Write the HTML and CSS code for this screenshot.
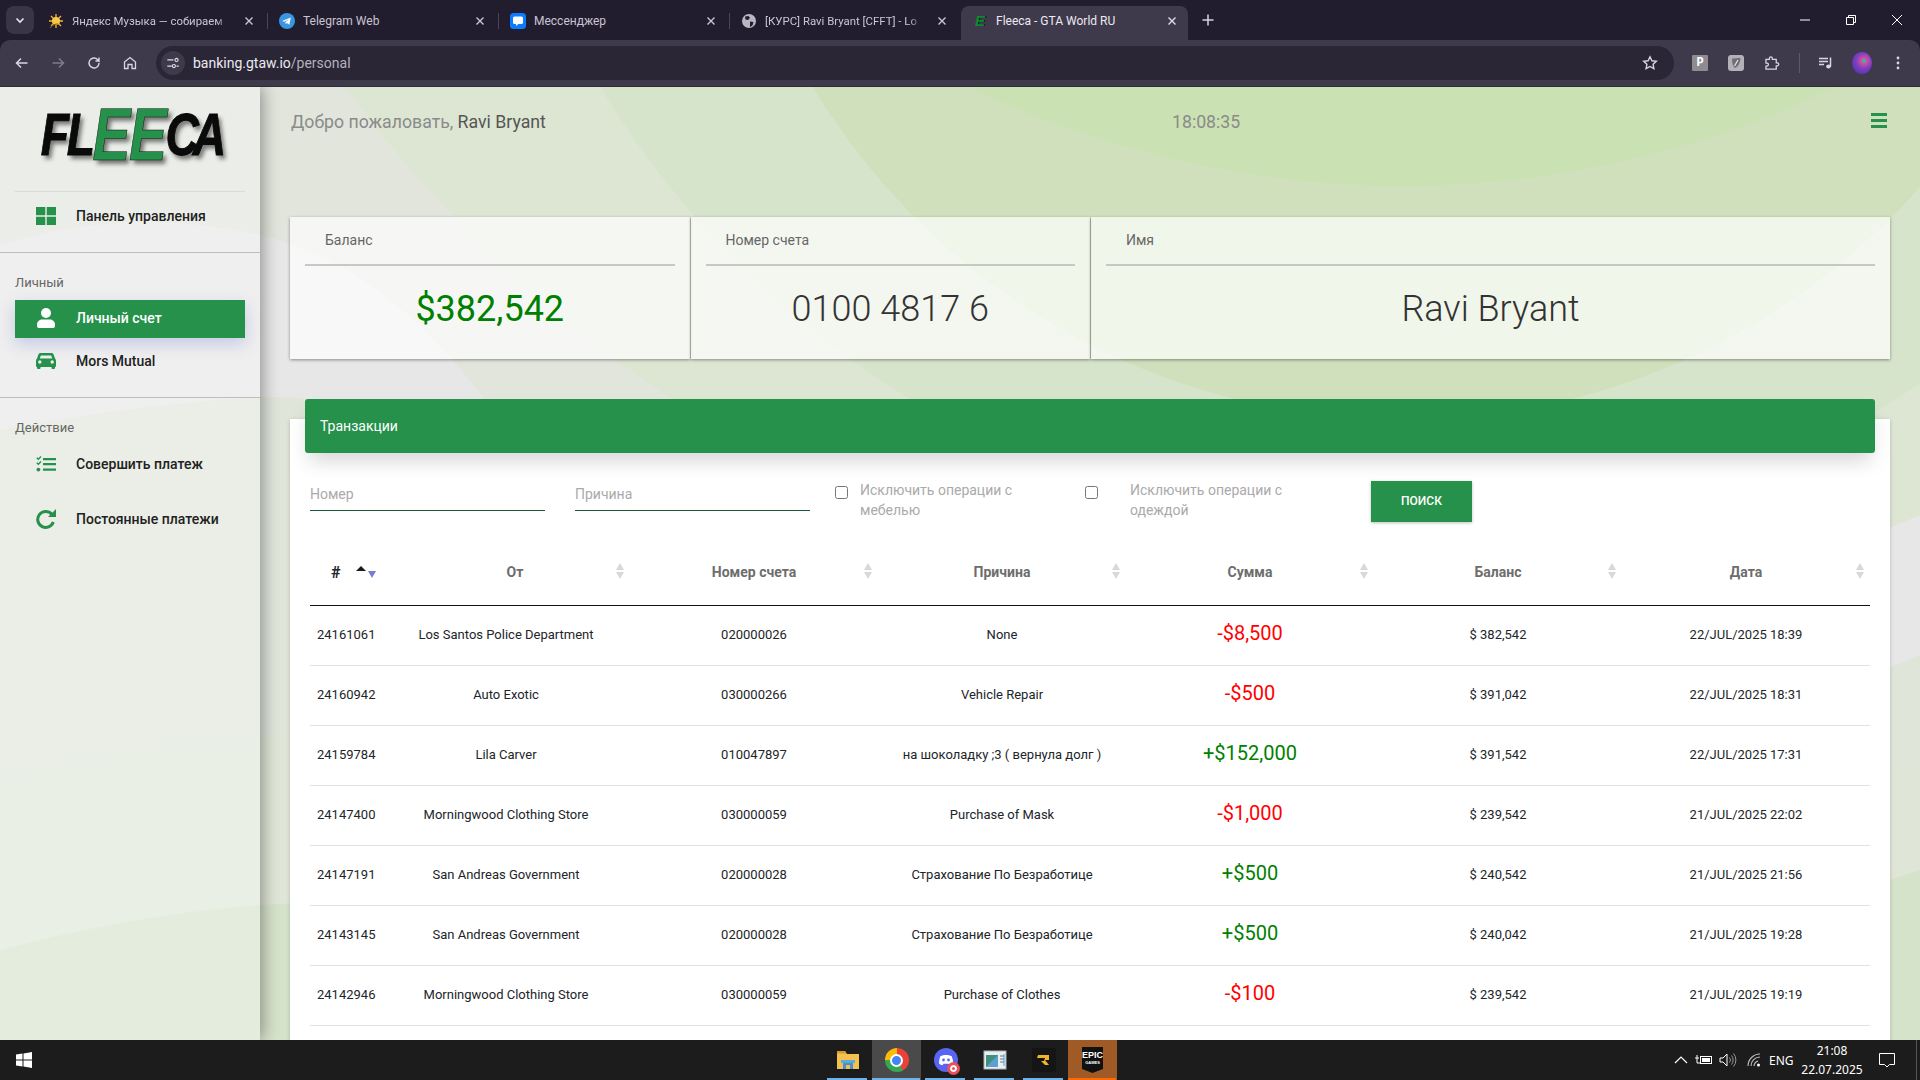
FILE: index.html
```html
<!DOCTYPE html>
<html lang="ru">
<head>
<meta charset="utf-8">
<title>Fleeca - GTA World RU</title>
<link rel="stylesheet" href="styles.css">
</head>
<body>
<div class="app">
  <header class="browser">
    <div class="tabstrip">
      <button class="tablist"><svg width="12" height="12" viewBox="0 0 12 12"><path d="M2.5 4.5 6 8l3.5-3.5" fill="none" stroke="#e8e6ef" stroke-width="1.6"/></svg></button>
      <div class="tab sep">
        <svg class="fav" viewBox="0 0 16 16"><g stroke="#f2b632" stroke-width="1.3"><path d="M8 1v14M1 8h14M3 3l10 10M13 3 3 13"/></g><circle cx="8" cy="8" r="4" fill="#f7c948"/><path d="M2 15c2-3 5-4 8-4" stroke="#8a5a1c" stroke-width="1.2" fill="none"/></svg>
        <span class="tab-title tight fade">Яндекс Музыка — собираем</span>
        <svg class="tab-x" viewBox="0 0 16 16"><path d="m4.5 4.5 7 7m0-7-7 7" stroke="#c9c5d3" stroke-width="1.4"/></svg>
      </div>
      <div class="tab sep">
        <svg class="fav" viewBox="0 0 16 16"><circle cx="8" cy="8" r="8" fill="#3a96e0"/><path d="M3.2 7.9 11.8 4.5 10.4 11.8 7.9 10 6.6 11.2 6.5 9.2 10.2 6 5.5 8.7Z" fill="#fff"/></svg>
        <span class="tab-title">Telegram Web</span>
        <svg class="tab-x" viewBox="0 0 16 16"><path d="m4.5 4.5 7 7m0-7-7 7" stroke="#c9c5d3" stroke-width="1.4"/></svg>
      </div>
      <div class="tab sep">
        <svg class="fav" viewBox="0 0 16 16"><rect width="16" height="16" rx="3.5" fill="#0a7cff"/><path d="M4.5 3.5h7a1.5 1.5 0 0 1 1.5 1.5v4.5a1.5 1.5 0 0 1-1.5 1.5H8.5L6 13v-2H4.500A1.500 1.500 0 0 1 3 9.500V5a1.500 1.500 0 0 1 1.500-1.500Z" fill="#fff"/></svg>
        <span class="tab-title">Мессенджер</span>
        <svg class="tab-x" viewBox="0 0 16 16"><path d="m4.5 4.500 7 7m0-7-7 7" stroke="#c9c5d3" stroke-width="1.4"/></svg>
      </div>
      <div class="tab">
        <svg class="fav" viewBox="0 0 16 16"><circle cx="8" cy="8" r="7" fill="#b9b6c2"/><path d="M4 3.500 7.500 3 9 5 7 7 4.500 6.500ZM9 8.500l3.500.5-1 3.500L9 14Z" fill="#221d2e"/></svg>
        <span class="tab-title tight fade">[КУРС] Ravi Bryant [CFFT] - Lo</span>
        <svg class="tab-x" viewBox="0 0 16 16"><path d="m4.500 4.500 7 7m0-7-7 7" stroke="#c9c5d3" stroke-width="1.400"/></svg>
      </div>
      <div class="tab tab-active">
        <span class="fav fav-e">E</span>
        <span class="tab-title">Fleeca - GTA World RU</span>
        <svg class="tab-x" viewBox="0 0 16 16"><path d="m4.500 4.500 7 7m0-7-7 7" stroke="#e0dde8" stroke-width="1.400"/></svg>
      </div>
      <svg class="newtab" viewBox="0 0 16 16"><path d="M8 2.500v11M2.500 8h11" stroke="#d8d5e0" stroke-width="1.500"/></svg>
      <div class="winbtns">
        <svg viewBox="0 0 46 40"><path d="M18 20h10" stroke="#fff"/></svg>
        <svg viewBox="0 0 46 40"><path d="M18.500 17.500h7v7h-7zM20.500 17.500v-2h7v7h-2" fill="none" stroke="#fff"/></svg>
        <svg viewBox="0 0 46 40"><path d="m18 15 10 10m0-10L18 25" stroke="#fff"/></svg>
      </div>
    </div>
    <div class="toolbar">
      <span class="tb-btn"><svg viewBox="0 0 16 16"><path d="M13.500 8h-11M7 3.500 2.500 8 7 12.500" fill="none" stroke="#d9d6e0" stroke-width="1.500"/></svg></span>
      <span class="tb-btn"><svg viewBox="0 0 16 16"><path d="M2.500 8h11M9 3.500 13.500 8 9 12.500" fill="none" stroke="#7f7b8a" stroke-width="1.500"/></svg></span>
      <span class="tb-btn"><svg viewBox="0 0 16 16"><path d="M13 8a5 5 0 1 1-1.500-3.600L13 6V2.500M13 6H9.500" fill="none" stroke="#d9d6e0" stroke-width="1.400"/></svg></span>
      <span class="tb-btn"><svg viewBox="0 0 16 16"><path d="M2.500 7 8 2.500 13.500 7v6.500h-3.500V9.500H6v4H2.500Z" fill="none" stroke="#d9d6e0" stroke-width="1.300"/></svg></span>
      <div class="omnibox">
        <span class="chip"><svg viewBox="0 0 16 16" width="14" height="14"><path d="M1.500 4.500h7M12 11.500h2.500M1.500 11.500h5" stroke="#e0dde8" stroke-width="1.300"/><circle cx="12" cy="4.500" r="1.800" fill="none" stroke="#e0dde8" stroke-width="1.300"/><circle cx="9" cy="11.500" r="1.800" fill="none" stroke="#e0dde8" stroke-width="1.300"/></svg></span>
        <span class="url">banking.gtaw.io<span class="url-path">/personal</span></span>
        <svg class="star" viewBox="0 0 16 16"><path d="m8 1.800 1.900 4 4.400.5-3.200 3 .8 4.400L8 11.500l-3.900 2.200.8-4.400-3.200-3 4.400-.5Z" fill="none" stroke="#d9d6e0" stroke-width="1.400"/></svg>
      </div>
      <span class="tb-btn ext-first"><span class="ext-p">P</span></span>
      <span class="tb-btn"><svg viewBox="0 0 16 16"><rect width="16" height="16" rx="3" fill="#b3b1b8"/><path d="M4 3.500c3 0 6-.5 8.500-.5-.3 4-1.500 8-5.500 10-2-1.500-3-5-3-9.500Z" fill="#6f6d75"/><path d="m10 5-3.500 6" stroke="#e6e5e8" stroke-width="1.200"/></svg></span>
      <span class="tb-btn"><svg viewBox="0 0 16 16"><path d="M2 4h3.500V3a1.500 1.500 0 0 1 3 0v1H12.500v3.500h1a1.300 1.300 0 0 1 0 3h-1V14H2v-3.200h1a1.500 1.500 0 0 0 0-3H2Z" transform="translate(0 .5) scale(.98)" fill="none" stroke="#d9d6e0" stroke-width="1.300"/></svg></span>
      <span class="tb-line"></span>
      <span class="tb-btn"><svg viewBox="0 0 16 16"><path d="M1 3.500h9M1 6.500h9M1 9.500h5" stroke="#d9d6e0" stroke-width="1.400"/><path d="M12.500 2.500v9" stroke="#d9d6e0" stroke-width="1.500"/><ellipse cx="10.500" cy="11.500" rx="2.300" ry="2" fill="#d9d6e0"/></svg></span>
      <span class="tb-btn"><span class="avatar"></span></span>
      <span class="tb-btn"><svg viewBox="0 0 16 16"><circle cx="8" cy="3" r="1.400" fill="#d9d6e0"/><circle cx="8" cy="8" r="1.400" fill="#d9d6e0"/><circle cx="8" cy="13" r="1.400" fill="#d9d6e0"/></svg></span>
    </div>
  </header>

  <div class="page">
    <svg class="bg" viewBox="0 87 1920 953" preserveAspectRatio="none" aria-hidden="true">
      <rect x="0" y="87" width="1920" height="953" fill="#d6e3cb"/>
      <path d="M0 950Q130 915 260 905T1890 880L1920 870V87H0Z" fill="#dfe6d7"/>
      <path d="M0 777Q130 745 260 737T1890 773L1920 762V87H0Z" fill="#e0e5da"/>
      <path d="M0 430Q130 405 260 397T1890 667L1920 655V87H0Z" fill="#e7e7e7"/>
      <path d="M0 245Q130 205 260 235T500 420H1920V87H0Z" fill="#e1e5dc"/>
      <circle cx="1403" cy="-694" r="1315" fill="#dde6d3"/>
      <circle cx="1403" cy="-400" r="939" fill="#d7e4cc"/>
      <circle cx="1403" cy="-270" r="690" fill="#d0e0bd"/>
      <circle cx="1403" cy="-814" r="1000" fill="#cae2b3"/>
    </svg>

    <aside class="sidebar">
      <div class="logo"><span class="logo-word"><span class="logo-fl">FL</span><span class="logo-ee">EE</span><span class="logo-ca">CA</span></span></div>
      <a class="nav-item nav-dash">
        <svg class="nav-ico" viewBox="0 0 20 18"><path d="M0 0h9.300v8.200H0zM10.700 0H20v8.200h-9.300zM0 9.800h9.300V18H0zM10.700 9.800H20V18h-9.300z" fill="#25914a"/></svg>
        Панель управления
      </a>
      <section class="nav-section sec-bordered">
        <div class="nav-label">Личный</div>
        <a class="nav-item active">
          <svg class="nav-ico" viewBox="0 0 20 20"><circle cx="10" cy="5" r="5" fill="#fff"/><path d="M1 16.500C1 13 4 11.500 6 11.500h8c2 0 5 1.500 5 5V18a2 2 0 0 1-2 2H3a2 2 0 0 1-2-2Z" fill="#fff"/></svg>
          Личный счет
        </a>
        <a class="nav-item item-next">
          <svg class="nav-ico" viewBox="0 0 20 16"><path d="M4.500 0h11c1 0 1.800.6 2.100 1.500L19 5.500c.6.500 1 1.200 1 2V13a1 1 0 0 1-1 1v1a1 1 0 0 1-1 1h-1.500a1 1 0 0 1-1-1v-1h-11v1a1 1 0 0 1-1 1H2a1 1 0 0 1-1-1v-1a1 1 0 0 1-1-1V7.500c0-.8.400-1.500 1-2l1.400-4C2.700.6 3.500 0 4.500 0Zm.3 2.500L3.800 5.500h12.400l-1-3ZM3.800 7.300a1.700 1.700 0 1 0 0 3.400 1.700 1.700 0 0 0 0-3.400Zm12.400 0a1.700 1.700 0 1 0 0 3.400 1.700 1.700 0 0 0 0-3.400Z" fill="#25914a" fill-rule="evenodd"/></svg>
          Mors Mutual
        </a>
      </section>
      <section class="nav-section">
        <div class="nav-label">Действие</div>
        <a class="nav-item item-first">
          <svg class="nav-ico" viewBox="0 0 20 16"><path d="M7 2h13v2.300H7zM7 7h13v2.300H7zM7 12.500h13v2.300H7z" fill="#25914a"/><path d="m.8 1.800 1.500 1.500L5 .6M.8 6.800l1.500 1.500L5 5.600" fill="none" stroke="#25914a" stroke-width="1.400"/><circle cx="2.400" cy="13.600" r="1.900" fill="#25914a"/></svg>
          Совершить платеж
        </a>
        <a class="nav-item item-wide">
          <svg class="nav-ico" viewBox="0 0 20 20"><path d="M15.800 5.200A8 8 0 1 0 17.300 13" fill="none" stroke="#25914a" stroke-width="3"/><path d="M20 0v8h-8Z" fill="#25914a"/></svg>
          Постоянные платежи
        </a>
      </section>
    </aside>

    <main class="main">
      <div class="topbar">
        <div class="welcome">Добро пожаловать, <span class="welcome-name">Ravi Bryant</span></div>
        <div class="clock">18:08:35</div>
        <div class="burger"><i></i><i></i><i></i></div>
      </div>

      <div class="cards">
        <div class="card"><div class="card-title">Баланс</div><div class="card-value money">$382,542</div></div>
        <div class="card"><div class="card-title">Номер счета</div><div class="card-value">0100 4817 6</div></div>
        <div class="card"><div class="card-title">Имя</div><div class="card-value">Ravi Bryant</div></div>
      </div>

      <section class="panel">
        <div class="panel-head">Транзакции</div>
        <form class="filters">
          <input class="field" type="text" placeholder="Номер">
          <input class="field field-next" type="text" placeholder="Причина">
          <label class="check check-a"><input type="checkbox"><span>Исключить операции с мебелью</span></label>
          <label class="check check-b"><input type="checkbox"><span>Исключить операции с одеждой</span></label>
          <button class="search" type="button">ПОИСК</button>
        </form>
        <table class="tx">
          <colgroup><col class="c-id"><col class="c-from"><col class="c-n"><col class="c-n"><col class="c-n"><col class="c-n"><col class="c-n"></colgroup>
          <thead>
            <tr>
              <th class="th-id">#<i class="sort-up"></i><i class="sort-down"></i></th>
              <th class="th-from">От<i class="sort"></i></th>
              <th>Номер счета<i class="sort"></i></th>
              <th>Причина<i class="sort"></i></th>
              <th>Сумма<i class="sort"></i></th>
              <th>Баланс<i class="sort"></i></th>
              <th>Дата<i class="sort"></i></th>
            </tr>
          </thead>
          <tbody>
            <tr><td>24161061</td><td class="from">Los Santos Police Department</td><td>020000026</td><td>None</td><td class="neg">-$8,500</td><td>$ 382,542</td><td>22/JUL/2025 18:39</td></tr>
            <tr><td>24160942</td><td class="from">Auto Exotic</td><td>030000266</td><td>Vehicle Repair</td><td class="neg">-$500</td><td>$ 391,042</td><td>22/JUL/2025 18:31</td></tr>
            <tr><td>24159784</td><td class="from">Lila Carver</td><td>010047897</td><td>на шоколадку ;3 ( вернула долг )</td><td class="pos">+$152,000</td><td>$ 391,542</td><td>22/JUL/2025 17:31</td></tr>
            <tr><td>24147400</td><td class="from">Morningwood Clothing Store</td><td>030000059</td><td>Purchase of Mask</td><td class="neg">-$1,000</td><td>$ 239,542</td><td>21/JUL/2025 22:02</td></tr>
            <tr><td>24147191</td><td class="from">San Andreas Government</td><td>020000028</td><td>Страхование По Безработице</td><td class="pos">+$500</td><td>$ 240,542</td><td>21/JUL/2025 21:56</td></tr>
            <tr><td>24143145</td><td class="from">San Andreas Government</td><td>020000028</td><td>Страхование По Безработице</td><td class="pos">+$500</td><td>$ 240,042</td><td>21/JUL/2025 19:28</td></tr>
            <tr><td>24142946</td><td class="from">Morningwood Clothing Store</td><td>030000059</td><td>Purchase of Clothes</td><td class="neg">-$100</td><td>$ 239,542</td><td>21/JUL/2025 19:19</td></tr>
          </tbody>
        </table>
      </section>
    </main>
  </div>

  <footer class="taskbar">
    <span class="start"><svg viewBox="0 0 16 16" width="16" height="16"><path d="M0 2.500 6.500 1.600V7.500H0ZM7.500 1.400 16 0V7.500H7.500ZM0 8.500H6.500V14.400L0 13.500ZM7.500 8.500H16V16L7.500 14.600Z" fill="#fff"/></svg></span>
    <div class="task-apps">
      <span class="app-slot run"><svg viewBox="0 0 24 24" width="24" height="24"><path d="M1 3h8l2 3h12v15H1Z" fill="#f3c14f"/><path d="M1 3h8l1.500 2.500H1Z" fill="#d99c2b"/><path d="M7 14h10v7h-3v-4h-4v4H7Z" fill="#4a90c9"/><path d="M5 12h14v3H5Z" fill="#5fa8de"/></svg></span>
      <span class="app-slot run-full"><span class="chrome"><span class="chrome-in"></span></span></span>
      <span class="app-slot run"><span class="discord"><svg viewBox="0 0 24 24" width="24" height="24"><circle cx="12" cy="12" r="12" fill="#5865f2"/><path d="M6.500 8c3-1.500 8-1.500 11 0 1 2 1.800 5 1.500 7.500-1.200 1-2.500 1.500-3.500 1.700l-1-1.500h-5l-1 1.500c-1-.2-2.300-.7-3.500-1.700C5 13 5.500 10 6.500 8Z" fill="#fff"/><circle cx="9.500" cy="12" r="1.400" fill="#5865f2"/><circle cx="14.500" cy="12" r="1.400" fill="#5865f2"/></svg><i class="rec"></i></span></span>
      <span class="app-slot run"><svg viewBox="0 0 24 24" width="24" height="24"><rect x="1" y="3" width="22" height="18" fill="#eceff1"/><rect x="1" y="3" width="22" height="18" fill="none" stroke="#a9b2b8"/><path d="M3 7h12v12H3Z" fill="#3f8f7d"/><path d="M3 19 15 7v12Z" fill="#5f9fd0"/><path d="M17 8h4M17 11h4M17 14h4" stroke="#6b7780"/><path d="M21 6v12" stroke="#3aa3d8"/></svg></span>
      <span class="app-slot run"><span class="rstar"><svg viewBox="0 0 14 12" width="14" height="12"><path d="M1 1h11v5H8l4 5H8L4 7H7l1-3H0Z" fill="#f0b429"/></svg></span></span>
      <span class="app-slot run-epic"><span class="epic">EPIC<small>GAMES</small></span></span>
    </div>
    <div class="tray">
      <svg viewBox="0 0 16 16" width="16" height="16" class="tr-caret"><path d="m2 11 6-6 6 6" fill="none" stroke="#fff" stroke-width="1.200"/></svg>
      <svg viewBox="0 0 18 16" width="18" height="16" class="tr-bat"><path d="M0 6h4M2 3v3" stroke="#fff"/><rect x="5.500" y="4.500" width="11" height="7" fill="none" stroke="#fff"/><rect x="7" y="6" width="8" height="4" fill="#fff"/><path d="M2 6v5h3" fill="none" stroke="#fff"/></svg>
      <svg viewBox="0 0 18 16" width="18" height="16" class="tr-vol"><path d="M1 6h3l4-4v12l-4-4H1Z" fill="none" stroke="#fff"/><path d="M10.500 5.500a4 4 0 0 1 0 5M12.500 3.500a7 7 0 0 1 0 9M14.500 1.500a10 10 0 0 1 0 13" fill="none" stroke="#999"/></svg>
      <svg viewBox="0 0 16 16" width="16" height="16" class="tr-wifi"><path d="M2 14A12 12 0 0 1 14 2M5 14a9 9 0 0 1 9-9M8 14a6 6 0 0 1 4-5" fill="none" stroke="#bbb" stroke-width="1.200"/><circle cx="12.500" cy="13" r="1.500" fill="#fff"/></svg>
      <span class="lang">ENG</span>
      <span class="datetime"><span>21:08</span><span>22.07.2025</span></span>
      <svg viewBox="0 0 18 16" width="18" height="16" class="tr-note"><path d="M1.500 1.500h15v11h-5L9 15l-2.500-2.500h-5Z" fill="none" stroke="#fff"/></svg>
      <i class="showdesk"></i>
    </div>
  </footer>
</div>
</body>
</html>
```
FILE: styles.css
```css
* { box-sizing: border-box; }
html, body { margin: 0; height: 100%; }
body { font-family: Roboto, "Noto Sans", sans-serif; color: #212529; overflow: hidden; }
.app { display: flex; flex-direction: column; height: 100vh; overflow: hidden; }

/* browser chrome */
.browser { flex: none; background: #221d2e; font-family: Roboto, "Noto Sans", sans-serif; }
.tabstrip { height: 40px; display: flex; align-items: flex-end; position: relative; padding-left: 37px; }
.tablist { position: absolute; left: 6px; top: 6px; width: 28px; height: 28px; border: 0; border-radius: 8px; background: #3a3546; display: flex; align-items: center; justify-content: center; padding: 0; }
.tab { width: 231px; height: 34px; padding: 0 11px 5px; display: flex; align-items: center; position: relative; font-size: 12px; color: #c9c5d3; }
.sep::after { content: ""; position: absolute; right: 0; top: 7px; height: 16px; width: 1px; background: #4a4556; }
.tab-active { width: 227px; padding-right: 8px; background: #3f394c; border-radius: 8px 8px 0 0; color: #eceaf2; }
.fav { width: 16px; height: 16px; flex: none; margin-right: 8px; }
.fav-e { font: italic 700 15px/16px "Liberation Sans", sans-serif; color: #0c8a30; text-align: center; text-shadow: 1px 0 0 #111; }
.tab-title { flex: 1; min-width: 0; white-space: nowrap; overflow: hidden; }
.tight { font-size: 11.4px; }
.fade { -webkit-mask-image: linear-gradient(90deg, #000 92%, transparent); mask-image: linear-gradient(90deg, #000 92%, transparent); }
.tab-x { width: 16px; height: 16px; flex: none; margin-left: 12px; }
.newtab { width: 16px; height: 16px; margin: 0 0 12px 12px; flex: none; }
.winbtns { margin-left: auto; display: flex; align-self: flex-start; }
.winbtns svg { width: 46px; height: 40px; display: block; }
.toolbar { height: 47px; background: #3f394c; border-radius: 10px 10px 0 0; border-bottom: 1px solid #2d2d33; display: flex; align-items: center; padding-left: 4px; }
.tb-btn { width: 36px; height: 36px; flex: none; display: flex; align-items: center; justify-content: center; }
.tb-btn svg { width: 16px; height: 16px; }
.omnibox { width: 1518px; height: 34px; margin-left: 8px; border-radius: 17px; background: #2b2635; display: flex; align-items: center; padding-left: 5px; flex: none; }
.chip { width: 24px; height: 24px; border-radius: 50%; background: #3f394c; display: flex; align-items: center; justify-content: center; flex: none; }
.url { margin-left: 8px; font-size: 14px; color: #eceaf2; }
.url-path { color: #b4b0bf; }
.star { width: 16px; height: 16px; margin-left: auto; margin-right: 16px; }
.ext-first { margin-left: 8px; }
.ext-p { width: 16px; height: 16px; border-radius: 1px; background: #8e8c93; color: #fff; font: 700 12px/16px "Liberation Mono", monospace; text-align: center; }
.tb-line { width: 18px; height: 20px; flex: none; position: relative; }
.tb-line::after { content: ""; position: absolute; left: 9px; top: 0; width: 1px; height: 20px; background: #5e596b; }
.avatar { width: 20px; height: 22px; border-radius: 50%; background: radial-gradient(circle at 60% 40%, #2fb7a5 0 8%, #d84f9c 14%, #7a3fc4 45%, #4b2f9a 100%); }

/* page */
.page { flex: 1; min-height: 0; display: flex; position: relative; overflow: hidden; }
.bg { position: absolute; inset: 0; width: 100%; height: 100%; }

.sidebar { width: 260px; flex: none; position: relative; background: rgba(255,255,255,.35); box-shadow: 2px 0 16px rgba(0,0,0,.4); }
.logo { height: 105px; margin: 0 15px; border-bottom: 1px solid #d9dbd5; display: flex; justify-content: center; align-items: flex-start; padding-top: 18px; }
.logo-word { display: block; height: 60px; white-space: nowrap; transform: scaleX(.77); font: italic 700 60px/60px "Liberation Sans", sans-serif; color: #0a0a0a; text-shadow: 4px 4px 5px rgba(0,0,0,.5); -webkit-text-stroke: 1px #0a0a0a; }
.logo-fl { letter-spacing: -3px; }
.logo-ca { letter-spacing: -8px; }
.logo-ee { color: #25914a; font-size: 74px; line-height: 60px; vertical-align: -5px; -webkit-text-stroke: .6px #111; letter-spacing: -2px; }
.nav-item { display: flex; align-items: center; height: 38px; margin: 0 15px; padding-left: 21px; font-size: 14px; font-weight: 500; color: #212121; }
.nav-ico { width: 20px; height: 20px; flex: none; margin-right: 20px; }
.nav-dash { height: 61px; padding-bottom: 12px; margin: 0; padding-left: 36px; border-bottom: 1px solid #bdbdbd; }
.nav-section { padding-top: 20px; }
.sec-bordered { padding-bottom: 17px; border-bottom: 1px solid #bdbdbd; }
.nav-label { margin: 0 15px 7px; font-size: 13px; line-height: 20px; color: #666; }
.active { background: #25914a; color: #fff; box-shadow: 0 6px 16px rgba(70,90,200,.25); padding-bottom: 2px; }
.item-next { margin-top: 4px; }
.item-first { margin-top: 4px; }
.item-wide { margin-top: 17px; }

.main { flex: 1; min-width: 0; position: relative; display: flex; flex-direction: column; padding: 0 30px; }
.topbar { height: 130px; flex: none; padding: 18px 4px 0 1px; display: grid; grid-template-columns: 881px auto 1fr; align-items: start; font-size: 17.7px; line-height: 34px; color: #8a8a8a; }
.welcome-name { color: #555; }
.burger { justify-self: end; display: flex; flex-direction: column; gap: 3px; margin-top: 8px; margin-right: -1px; }
.burger i { display: block; width: 16px; height: 3px; background: #25914a; }

.cards { flex: none; display: grid; grid-template-columns: 1fr 1fr 2fr; gap: 1px; height: 142px; }
.card { background: rgba(255,255,255,.7); box-shadow: 0 1px 3px rgba(0,0,0,.4); padding: 0 15px; display: flex; flex-direction: column; }
.card-title { height: 49px; flex: none; padding: 12px 0 0 20px; font-size: 14px; line-height: 22px; color: #666; border-bottom: 2px solid #c6c8c2; }
.card-value { flex: 1; display: flex; align-items: center; justify-content: center; font-size: 36px; font-weight: 300; color: #333; padding-bottom: 8px; }
.money { color: #008000; font-weight: 400; }

.panel { flex: 1; margin-top: 60px; background: #fff; padding: 0 20px; box-shadow: 0 1px 4px rgba(0,0,0,.2); }
.panel-head { height: 54px; margin: -20px -5px 0; padding: 0 0 1px 15px; display: flex; align-items: center; border-radius: 3px; background: #25914a; color: #fff; font-size: 14px; box-shadow: 0 12px 20px -4px rgba(0,0,0,.16); position: relative; }

.filters { height: 97px; padding-top: 27px; display: flex; align-items: flex-start; }
.field { width: 235px; height: 31px; border: 0; border-bottom: 1px solid #1d5a37; background: transparent; padding: 0 0 2px; font: 14px Roboto, sans-serif; outline: 0; }
.field::placeholder { color: #aaa; opacity: 1; }
.field-next { margin-left: 30px; }
.check { display: flex; align-items: flex-start; font-size: 14px; line-height: 20px; color: #aaa; }
.check input { margin: 6px 0 0; width: 13px; height: 13px; flex: none; }
.check-a { width: 250px; margin-left: 25px; }
.check-a span { margin-left: 12px; width: 180px; }
.check-b { width: 286px; }
.check-b span { margin-left: 32px; width: 180px; }
.search { margin-top: 1px; width: 101px; height: 41px; border: 0; background: #25914a; color: #fff; font: 500 12px Roboto, sans-serif; box-shadow: 0 1px 3px rgba(0,0,0,.25); padding: 0 0 1px; }

.tx { width: 1560px; table-layout: fixed; border-collapse: separate; border-spacing: 0; }
.c-id { width: 88px; }
.c-from { width: 232px; }
.c-n { width: 248px; }
.tx th { height: 56px; padding: 0 0 11px; border-bottom: 1px solid #111; font-size: 14px; font-weight: 700; color: #6d6d6d; text-align: center; position: relative; }
.tx th.th-id { color: #212529; font-size: 16px; text-align: left; padding-left: 21px; }
.tx th.th-from { padding-left: 2px; }
.sort, .sort-up, .sort-down { position: absolute; }
.sort { right: 6px; top: 13px; width: 8px; height: 16px; }
.sort::before, .sort::after { content: ""; position: absolute; left: 0; width: 0; height: 0; border-left: 4px solid transparent; border-right: 4px solid transparent; }
.sort::before { top: 0; border-bottom: 7px solid #d8d8d8; }
.sort::after { bottom: 0; border-top: 7px solid #d8d8d8; }
.sort-up { left: 46px; top: 16px; width: 0; height: 0; border: 5px solid transparent; border-top: 0; border-bottom: 5px solid #1a1a1a; }
.sort-down { left: 58px; top: 21px; width: 0; height: 0; border: 4px solid transparent; border-bottom: 0; border-top: 7px solid #7b7bd8; }
.tx td { height: 60px; padding: 0 0 3px; border-bottom: 1px solid #e2e2e2; font-size: 13px; text-align: center; color: #212529; white-space: nowrap; }
.tx td:first-child { text-align: left; padding-left: 7px; }
.tx td.from { padding-right: 16px; }
.tx td.neg { font-size: 20px; color: #f00; padding-bottom: 5px; }
.tx td.pos { font-size: 20px; color: #008000; padding-bottom: 5px; }

/* taskbar */
.taskbar { flex: none; height: 40px; background: #1c1c1c; display: flex; align-items: stretch; position: relative; color: #fff; font-family: "Noto Sans", sans-serif; }
.start { width: 48px; display: flex; align-items: center; justify-content: center; }
.task-apps { margin-left: 775px; display: flex; }
.app-slot { width: 49px; display: flex; align-items: center; justify-content: center; position: relative; }
.run::after { content: ""; position: absolute; left: 4px; right: 5px; bottom: 0; height: 2px; background: #6cb4ee; }
.run-full { background: #4a4a4a; }
.run-full::after { content: ""; position: absolute; left: 0; right: 1px; bottom: 0; height: 2px; background: #6cb4ee; }
.run-epic { background: #a05a25; }
.run-epic::after { content: ""; position: absolute; left: 0; right: 1px; bottom: 0; height: 2px; background: #ff6a00; }
.chrome { width: 24px; height: 24px; border-radius: 50%; background: conic-gradient(from 30deg, #ea4335 0 120deg, #34a853 120deg 240deg, #fbbc04 240deg 330deg, #ea4335 330deg); display: flex; align-items: center; justify-content: center; }
.chrome-in { border-radius: 50%; background: #4285f4; border: 2px solid #fff; box-sizing: content-box; width: 9px; height: 9px; }
.discord { width: 24px; height: 24px; position: relative; }
.discord svg { display: block; }
.rec { position: absolute; right: -2px; bottom: -3px; width: 13px; height: 13px; border-radius: 50%; background: #e8505b; border: 3px solid #e8505b; box-shadow: inset 0 0 0 2px #fff; }
.rstar { width: 24px; height: 24px; background: #151515; display: flex; align-items: center; justify-content: center; }
.epic { width: 21px; height: 26px; background: #111; color: #fff; font: 700 9px/10px "Liberation Sans", sans-serif; text-align: center; padding-top: 3px; clip-path: polygon(0 0, 100% 0, 100% 85%, 50% 100%, 0 85%); }
.epic small { display: block; font-size: 4px; line-height: 6px; }
.tray { position: absolute; right: 0; top: 0; bottom: 0; display: flex; align-items: center; }
.tr-caret { margin-right: 6px; }
.tr-bat { margin-right: 6px; }
.tr-vol { margin-right: 9px; }
.lang { font-size: 12px; margin-left: 7px; width: 26px; }
.datetime { width: 72px; margin-left: 1px; display: flex; flex-direction: column; align-items: center; font-size: 12px; line-height: 19px; }
.tr-note { margin-left: 10px; margin-right: 20px; }
.showdesk { width: 1px; height: 40px; background: #555; margin-right: 3px; }
```
